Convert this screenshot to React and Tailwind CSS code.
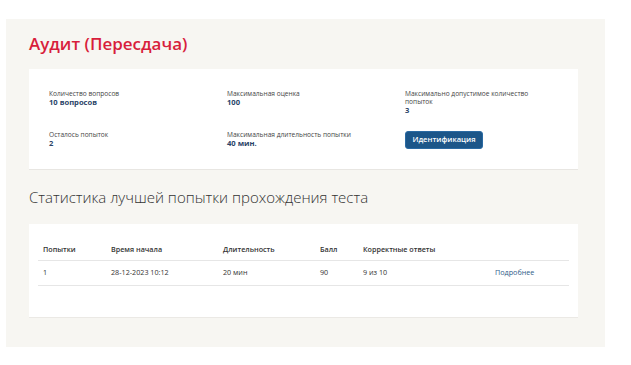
const font = { fontFamily: '"Open Sans", "Noto Sans", sans-serif' };

const rows = [
  { n: "1", start: "28-12-2023 10:12", dur: "20 мин", score: "90", correct: "9 из 10" },
];

function Info({ label, value }) {
  return (
    <div>
      <div className="text-[6.6px] leading-[8px] text-[#444]">{label}</div>
      <div className="text-[7.6px] leading-[9px] font-bold text-[#2b4468]">{value}</div>
    </div>
  );
}

export default function App() {
  return (
    <div className="w-[631px] h-[365px] bg-white pt-[19px] pl-[6px]" style={font}>
      <div className="w-[599px] h-[328px] bg-[#f7f6f2] px-[23px] pt-[12px]">
        <h1 className="text-[17px] leading-[26px] font-semibold text-[#d81e3c]">
          Аудит (Пересдача)
        </h1>

        <div className="mt-[12px] w-[549px] h-[101px] bg-white border-b border-[#e8e6e2] pl-[20px] pt-[21px]">
          <div className="grid grid-cols-[178px_178px_135px] gap-y-[16px]">
            <Info label="Количество вопросов" value="10 вопросов" />
            <Info label="Максимальная оценка" value="100" />
            <Info label="Максимально допустимое количество попыток" value="3" />
            <Info label="Осталось попыток" value="2" />
            <Info label="Максимальная длительность попытки" value="40 мин." />
            <div className="leading-none">
              <button className="block w-[78px] h-[18px] rounded-[3px] bg-[#1c5689] border border-[#2a6aa3] text-white text-[7.6px] font-semibold">
                Идентификация
              </button>
            </div>
          </div>
        </div>

        <h2 className="mt-[16px] text-[15px] leading-[22px] font-light text-[#333]">
          Статистика лучшей попытки прохождения теста
        </h2>

        <div className="mt-[16px] w-[549px] h-[94px] bg-white border-b border-[#ebe9e5] px-[9px] pt-[16px]">
          <table className="w-full text-left text-[7.2px] text-[#333] border-collapse">
            <thead>
              <tr className="h-[20px] border-b border-[#e6e6e6]">
                <th className="w-[68px] pl-[5px] font-semibold">Попытки</th>
                <th className="w-[112px] pl-[5px] font-semibold">Время начала</th>
                <th className="w-[97px] pl-[5px] font-semibold">Длительность</th>
                <th className="w-[43px] pl-[5px] font-semibold">Балл</th>
                <th className="w-[132px] pl-[5px] font-semibold">Корректные ответы</th>
                <th className="pl-[5px]"></th>
              </tr>
            </thead>
            <tbody>
              {rows.map((r) => (
                <tr key={r.n} className="h-[25px] border-b border-[#e6e6e6]">
                  <td className="pl-[5px]">{r.n}</td>
                  <td className="pl-[5px]">{r.start}</td>
                  <td className="pl-[5px]">{r.dur}</td>
                  <td className="pl-[5px]">{r.score}</td>
                  <td className="pl-[5px]">{r.correct}</td>
                  <td className="pl-[5px] text-[#2f5c8a]">Подробнее</td>
                </tr>
              ))}
            </tbody>
          </table>
        </div>
      </div>
    </div>
  );
}
